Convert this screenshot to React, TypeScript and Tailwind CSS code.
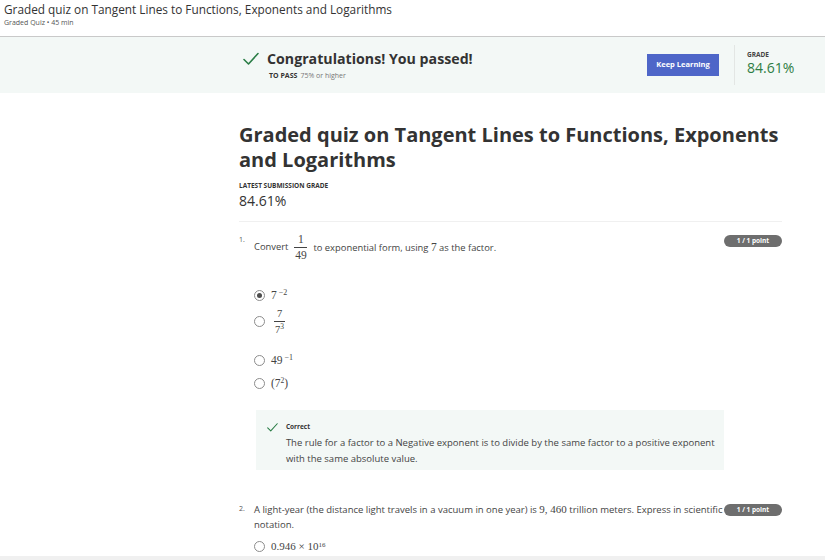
import React from 'react';

const sans = { fontFamily: '"Open Sans", "Liberation Sans", sans-serif' };

function Check({ className }: { className?: string }) {
  return (
    <svg viewBox="0 0 16 14" className={className} fill="none">
      <path d="M1 7.5 L5.5 12 L15 1.5" stroke="#2a7d46" strokeWidth="1.6" strokeLinecap="round" strokeLinejoin="round" />
    </svg>
  );
}

function Radio({ checked }: { checked?: boolean }) {
  return (
    <span className="w-[11px] h-[11px] rounded-full border border-[#8c8c8c] flex items-center justify-center shrink-0 bg-white">
      {checked && <span className="w-[5px] h-[5px] rounded-full bg-[#4d4d4d]" />}
    </span>
  );
}

function Badge() {
  return (
    <span className="h-[12px] w-[58px] rounded-full bg-[#6e6e6e] text-white text-[6.5px] font-bold flex items-center justify-center shrink-0">
      1 / 1 point
    </span>
  );
}

const serif = 'font-["Liberation_Serif",serif] text-[#444]';

export default function App() {
  return (
    <div className="w-[825px] h-[560px] overflow-hidden bg-white flex flex-col text-[#333]" style={sans}>
      <div className="h-[37px] shrink-0 border-b border-[#c9c9c9] px-[4px] pt-[1px]">
        <div className="text-[11.8px] leading-[17px] text-[#333]">Graded quiz on Tangent Lines to Functions, Exponents and Logarithms</div>
        <div className="text-[7px] leading-[9px] text-[#555]">Graded Quiz • 45 min</div>
      </div>

      <div className="h-[56px] shrink-0 bg-[#f3f8f6] flex items-center pl-[243px]">
        <div className="w-[404px] flex flex-col">
          <div className="flex items-center">
            <Check className="w-[16px] h-[14px]" />
            <span className="ml-[8px] text-[14.2px] font-bold leading-[20px] text-[#333]">Congratulations! You passed!</span>
          </div>
          <div className="ml-[26px] text-[7px] leading-[10px] mt-[2px]">
            <span className="font-bold text-[#333]">TO PASS</span>
            <span className="ml-[3px] text-[#777]">75% or higher</span>
          </div>
        </div>
        <div className="w-[72px] h-[22px] bg-[#4e66c8] text-white text-[7.5px] font-bold flex items-center justify-center">
          Keep Learning
        </div>
        <div className="ml-[15px] w-px h-[40px] bg-[#e3e6e4]" />
        <div className="ml-[12px] flex flex-col -mt-[3px]">
          <span className="text-[6.5px] font-bold leading-[9px] text-[#444]">GRADE</span>
          <span className="text-[14px] leading-[18px] text-[#2e7d44]">84.61%</span>
        </div>
      </div>

      <div className="flex-1 pl-[239px]">
        <div className="w-[543px] flex flex-col">
          <h1 className="mt-[29px] w-[548px] text-[20px] font-bold leading-[25px] text-[#333]">
            Graded quiz on Tangent Lines to Functions, Exponents and Logarithms
          </h1>
          <div className="mt-[9px] text-[6.5px] font-bold leading-[9px] text-[#333]">LATEST SUBMISSION GRADE</div>
          <div className="mt-[1px] text-[14px] leading-[20px] text-[#333]">84.61%</div>
          <div className="mt-[10px] h-px bg-[#f0f0f0]" />

          <div className="mt-[12px] flex items-start">
            <span className="text-[7px] leading-[10px] w-[15px] pt-[1px] text-[#555]">1.</span>
            <div className="flex-1 flex items-center text-[9.4px] text-[#444]">
              <span>Convert</span>
              <span className={`mx-[6px] inline-flex flex-col items-center ${serif} text-[11.5px] leading-[11px]`}>
                <span>1</span>
                <span className="w-[13px] h-px bg-[#444] my-[2px]" />
                <span>49</span>
              </span>
              <span>to exponential form, using <span className={`${serif} text-[11.5px]`}>7</span> as the factor.</span>
            </div>
            <div className="mt-[1px]"><Badge /></div>
          </div>

          <div className="ml-[15px] mt-[28px] flex flex-col">
            <div className="flex items-center h-[12px]">
              <Radio checked />
              <span className={`ml-[6px] ${serif} text-[11.5px] leading-[12px]`}>7<sup className="text-[8px] ml-[2px]">−2</sup></span>
            </div>
            <div className="flex items-center h-[28px] mt-[6px]">
              <Radio />
              <span className={`ml-[9px] inline-flex flex-col items-center ${serif} text-[10.5px] leading-[11px]`}>
                <span>7</span>
                <span className="w-[11px] h-px bg-[#444] my-[2px]" />
                <span>7<sup className="text-[7.5px]">3</sup></span>
              </span>
            </div>
            <div className="flex items-center h-[12px] mt-[19px]">
              <Radio />
              <span className={`ml-[6px] ${serif} text-[11.5px] leading-[12px]`}>49<sup className="text-[8px] ml-[2px]">−1</sup></span>
            </div>
            <div className="flex items-center h-[12px] mt-[11px]">
              <Radio />
              <span className={`ml-[6px] ${serif} text-[11.5px] leading-[12px]`}>(7<sup className="text-[7.5px]">2</sup>)</span>
            </div>
          </div>

          <div className="ml-[17px] mt-[21px] w-[468px] h-[60px] bg-[#f3f8f6] flex pt-[11px] pl-[11px]">
            <Check className="w-[14px] h-[11px] mt-[1px]" />
            <div className="ml-[8px] flex flex-col">
              <span className="text-[6.5px] font-bold leading-[9px] text-[#333] mt-[1px]">Correct</span>
              <p className="mt-[4px] text-[9.5px] leading-[16px] text-[#444]">
                The rule for a factor to a Negative exponent is to divide by the same factor to a positive exponent with the same absolute value.
              </p>
            </div>
          </div>

          <div className="mt-[34px] flex items-start">
            <span className="text-[7px] leading-[10px] w-[15px] text-[#555]">2.</span>
            <p className="flex-1 text-[9.5px] leading-[15px] text-[#444] -mt-[2px]">
              A light-year (the distance light travels in a vacuum in one year) is <span className={`inline-block ${serif} text-[11px] leading-[15px]`}>9, 460</span> trillion meters. Express in scientific notation.
            </p>
            <Badge />
          </div>
          <div className="ml-[15px] mt-[8px] flex items-center h-[12px]">
            <Radio />
            <span className={`ml-[6px] ${serif} text-[11px] leading-[12px]`}>0.946 × 10<sup className="text-[7px]">16</sup></span>
          </div>
        </div>
      </div>
      <div className="h-[4px] shrink-0 bg-[#f0f0f0]" />
    </div>
  );
}
